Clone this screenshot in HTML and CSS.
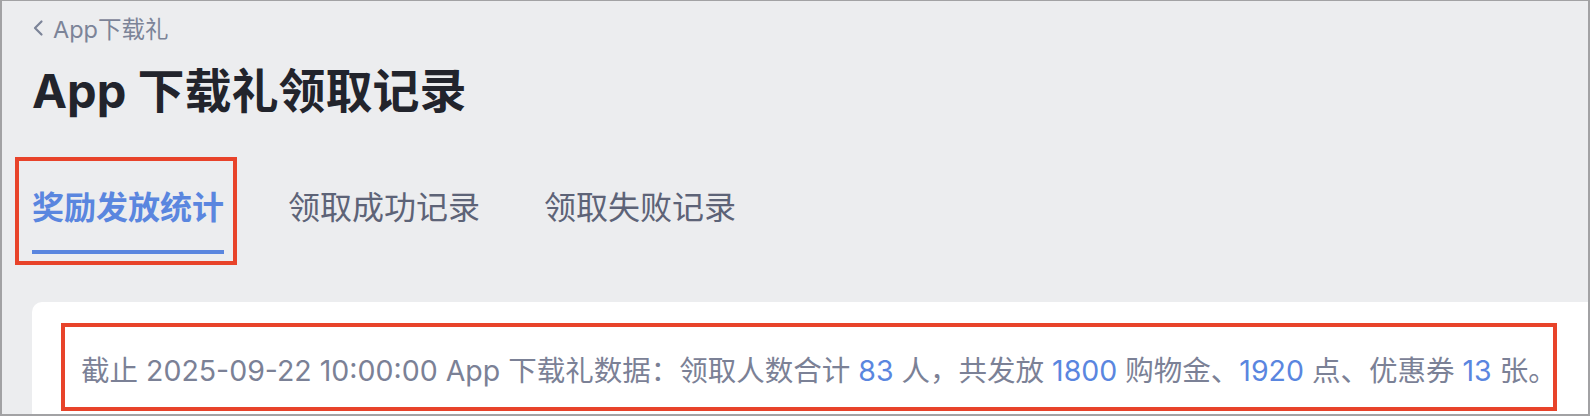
FILE: index.html
```html
<!DOCTYPE html>
<html lang="zh-CN">
<head>
    <meta charset="UTF-8">
    <meta name="viewport" content="width=device-width, initial-scale=1.0">
    <title>App 下载礼领取记录</title>
    <link rel="stylesheet" href="styles.css">
</head>
<body>
    <div class="page">
        <a class="back-link" href="#">
            <svg class="back-icon" width="12" height="18" viewBox="0 0 12 18">
                <path d="M9.5 2.5 L3 9 L9.5 15.5" fill="none" stroke="currentColor" stroke-width="2.2" stroke-linecap="round" stroke-linejoin="round"/>
            </svg>
            <span>App下载礼</span>
        </a>

        <h1 class="page-title">App 下载礼领取记录</h1>

        <div class="tabs">
            <div class="tab active mark-tab">奖励发放统计</div>
            <div class="tab">领取成功记录</div>
            <div class="tab">领取失败记录</div>
        </div>

        <div class="card">
            <p class="summary mark-summary">截止 2025-09-22 10:00:00 App 下载礼数据：领取人数合计 <span class="num">83</span> 人，共发放 <span class="num">1800</span> 购物金、<span class="num">1920</span> 点、优惠券 <span class="num">13</span> 张。</p>
        </div>
    </div>
</body>
</html>
```

FILE: styles.css
```css
body {
    margin: 0;
    font-family: Inter, "Noto Sans CJK SC", sans-serif;
    background-color: #fff;
}

.page {
    box-sizing: border-box;
    width: 1590px;
    height: 416px;
    overflow: hidden;
    background-color: #ecedef;
    border: 2px solid #a2a2a4;
    border-top-width: 1px;
    padding: 12px 0 0 30px;
}

.back-link {
    display: flex;
    align-items: center;
    height: 30px;
    color: #7c8498;
    font-size: 23.5px;
    text-decoration: none;
}

.back-icon {
    margin-right: 9px;
}

.page-title {
    margin: 18px 0 0;
    font-size: 47px;
    line-height: 60px;
    font-weight: 700;
    color: #22242c;
}

.tabs {
    display: flex;
    gap: 64px;
    margin-top: 65px;
}

.tab {
    font-size: 32px;
    line-height: 44px;
    color: #5d6377;
    padding-bottom: 20px;
    border-bottom: 4px solid transparent;
}

.tab.active {
    color: #5a86df;
    font-weight: 700;
    border-bottom-color: #5a86df;
}

.card {
    margin-top: 48px;
    height: 200px;
    background-color: #fff;
    border-radius: 10px 0 0 0;
    padding: 49px 0 0 49px;
}

.summary {
    display: inline-block;
    margin: 0;
    font-size: 28.5px;
    line-height: 40px;
    color: #7b8196;
    white-space: nowrap;
}

.num {
    color: #5a86df;
}

/* red highlight frames */
.mark-tab,
.mark-summary {
    position: relative;
}

.mark-tab::after,
.mark-summary::after {
    content: "";
    position: absolute;
    border: 4px solid #e8432a;
    pointer-events: none;
}

.mark-tab::after {
    left: -17px;
    top: -29px;
    right: -13px;
    bottom: -15px;
}

.mark-summary::after {
    left: -20px;
    top: -28px;
    right: 0;
    bottom: -20px;
}
```
